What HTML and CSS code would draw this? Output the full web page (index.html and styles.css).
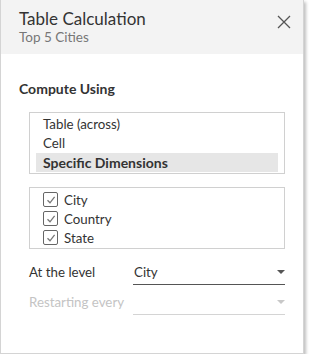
FILE: index.html
```html
<!DOCTYPE html>
<html>
<head>
   <meta charset="UTF-8">
   <title>Table Calculation</title>
   <link rel="stylesheet" href="styles.css">
</head>
<body>

<div class="panel">
   <div class="panel-head">
       <div class="head-text">
           <div class="title">Table Calculation</div>
           <div class="subtitle">Top 5 Cities</div>
       </div>
       <span class="close">
           <svg width="14" height="14" viewBox="0 0 14 14"><path d="M1 1L13 13M13 1L1 13" stroke="#555" stroke-width="1.3" fill="none"/></svg>
       </span>
   </div>
   <div class="panel-body">
       <div class="section-title">Compute Using</div>

       <div class="listbox">
           <div class="option">Table (across)</div>
           <div class="option">Cell</div>
           <div class="option on">Specific Dimensions</div>
       </div>

       <div class="listbox checks">
           <div class="check-row"><span class="box"><svg width="10" height="10" viewBox="0 0 10 10"><path d="M1.5 5.2L4 7.8L8.6 1.8" stroke="#777" stroke-width="1.3" fill="none"/></svg></span>City</div>
           <div class="check-row"><span class="box"><svg width="10" height="10" viewBox="0 0 10 10"><path d="M1.5 5.2L4 7.8L8.6 1.8" stroke="#777" stroke-width="1.3" fill="none"/></svg></span>Country</div>
           <div class="check-row"><span class="box"><svg width="10" height="10" viewBox="0 0 10 10"><path d="M1.5 5.2L4 7.8L8.6 1.8" stroke="#777" stroke-width="1.3" fill="none"/></svg></span>State</div>
       </div>

       <div class="field">
           <span class="label">At the level</span>
           <div class="select">
               <span>City</span>
               <span class="caret"></span>
           </div>
       </div>
       <div class="field disabled">
           <span class="label">Restarting every</span>
           <div class="select">
               <span></span>
               <span class="caret"></span>
           </div>
       </div>
   </div>
</div>

</body>
</html>
```
FILE: styles.css
```css
* {
    margin: 0;
    padding: 0;
    box-sizing: border-box;
}

body {
    background: #fff;
    font-family: Lato, "Liberation Sans", sans-serif;
    color: #333;
}

.panel {
    width: 304px;
    height: 354px;
    border: 1px solid #d4d4d4;
    border-top: none;
    background: #fff;
    box-shadow: 2px 2px 3px rgba(0, 0, 0, .25);
}

.panel-head {
    height: 54px;
    background: #f3f3f3;
    display: flex;
    justify-content: space-between;
    padding: 8px 12px 0 18px;
}

.title {
    font-size: 17px;
    line-height: 21px;
    color: #333;
}

.subtitle {
    font-size: 13.5px;
    line-height: 17px;
    color: #777;
}

.close {
    padding-top: 5px;
}

.panel-body {
    padding: 26px 18px 0 18px;
}

.section-title {
    font-size: 14px;
    font-weight: bold;
    color: #333;
    line-height: 17px;
}

.listbox {
    margin: 15px 0 0 10px;
    width: 256px;
    border: 1px solid #d0d0d0;
    padding: 2px 6px 0 6px;
    height: 62px;
    font-size: 13.3px;
}

.option {
    line-height: 19px;
    padding-left: 7px;
}

.option.on {
    background: #e6e6e6;
    font-weight: bold;
    font-size: 14px;
}

.checks {
    margin-top: 13px;
    padding: 2px 0 0 13px;
}

.check-row {
    display: flex;
    align-items: center;
    height: 19px;
}

.box {
    width: 15px;
    height: 15px;
    border: 1px solid #666;
    border-radius: 2px;
    margin-right: 6px;
    display: flex;
    align-items: center;
    justify-content: center;
}

.field {
    display: flex;
    align-items: flex-end;
    margin-left: 10px;
    margin-top: 13px;
    height: 23px;
    font-size: 13.3px;
}

.field + .field {
    margin-top: 7px;
}

.label {
    width: 104px;
    line-height: 18px;
    padding-bottom: 4px;
}

.select {
    width: 152px;
    height: 23px;
    border-bottom: 1px solid #555;
    display: flex;
    justify-content: space-between;
    align-items: center;
    padding: 0 0 2px 1px;
}

.caret {
    width: 0;
    height: 0;
    border-left: 4px solid transparent;
    border-right: 4px solid transparent;
    border-top: 4px solid #555;
}

.disabled {
    color: #c4c4c4;
}

.disabled .select {
    border-bottom-color: #d4d4d4;
}

.disabled .caret {
    border-top-color: #c8c8c8;
}
```
